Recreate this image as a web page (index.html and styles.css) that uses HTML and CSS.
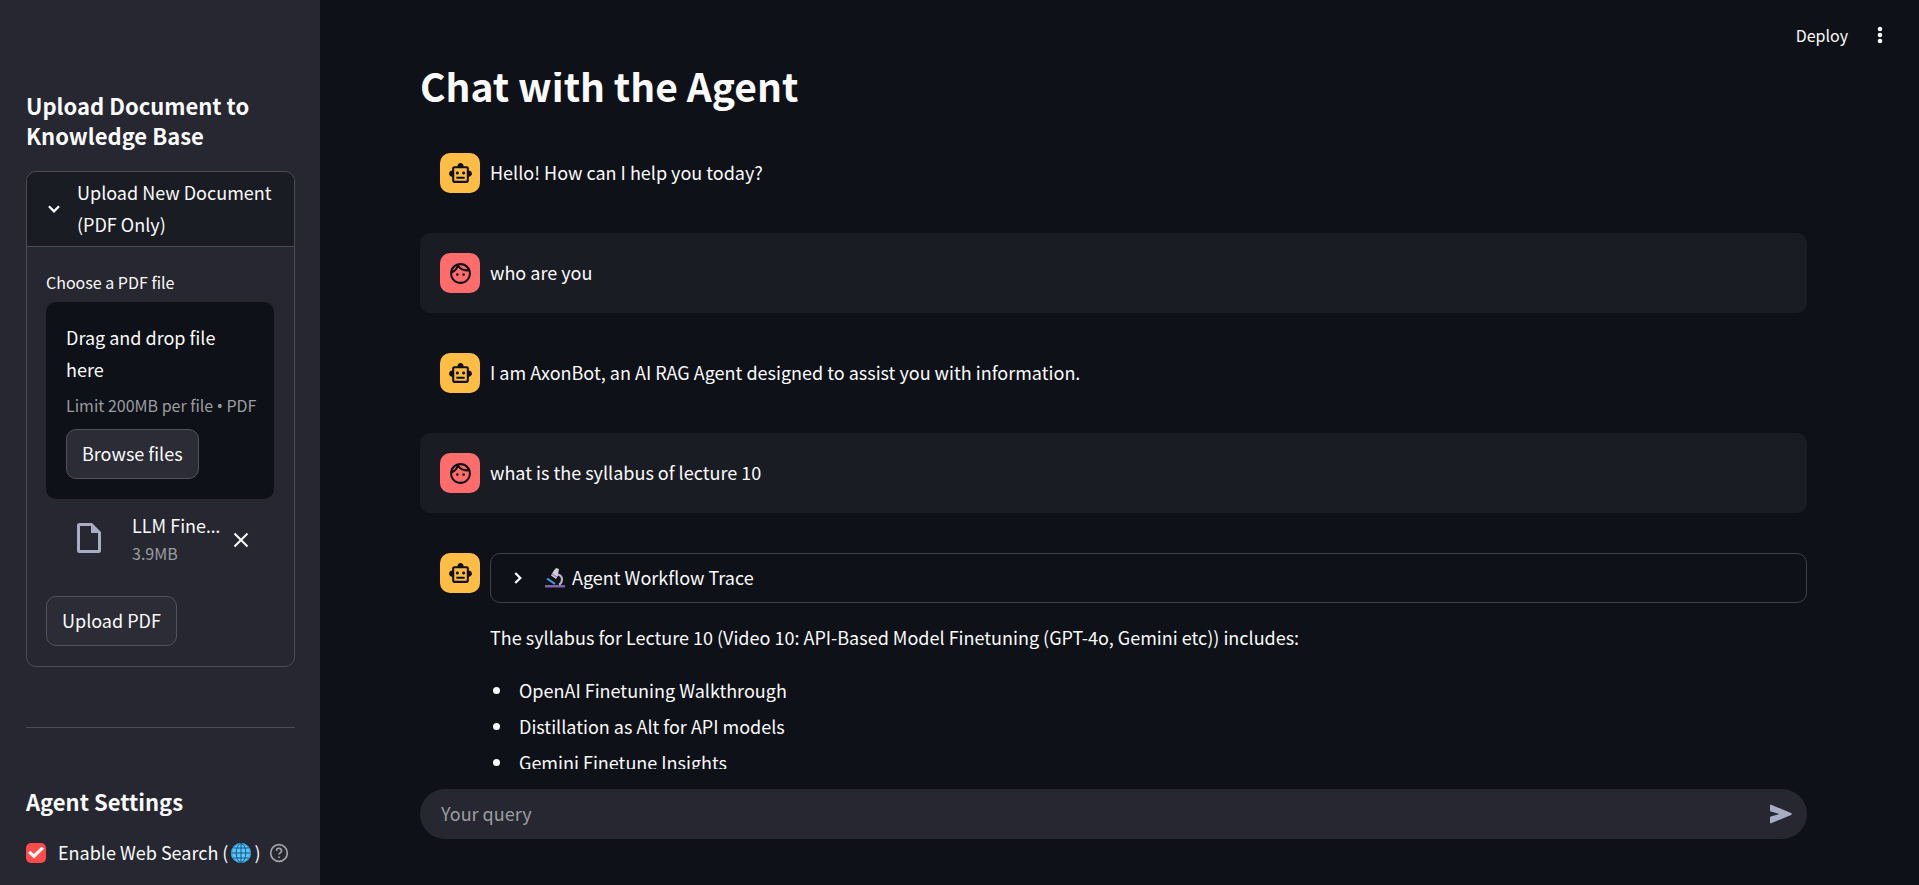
FILE: index.html
```html
<!DOCTYPE html>
<html lang="en">
<head>
<meta charset="utf-8">
<title>Chat with the Agent</title>
<link rel="stylesheet" href="styles.css">
</head>
<body>
<svg class="defs" aria-hidden="true">
  <symbol id="bot" viewBox="0 0 24 24"><path fill="currentColor" d="M20 9V7c0-1.100-.9-2-2-2h-3c0-1.660-1.340-3-3-3S9 3.340 9 5H6c-1.100 0-2 .9-2 2v2c-1.660 0-3 1.340-3 3s1.340 3 3 3v4c0 1.100.9 2 2 2h12c1.100 0 2-.9 2-2v-4c1.660 0 3-1.340 3-3s-1.340-3-3-3zm-2 10H6V7h12v12zm-9-6c-.83 0-1.500-.67-1.500-1.500S8.170 10 9 10s1.500.67 1.500 1.500S9.830 13 9 13zm7.500-1.500c0 .83-.67 1.500-1.500 1.500s-1.500-.67-1.500-1.500.67-1.500 1.500-1.500 1.500.67 1.500 1.500zM8 15h8v2H8v-2z"/></symbol>
  <symbol id="face" viewBox="0 0 24 24"><path fill="currentColor" d="M10.250 13c0 .69-.56 1.250-1.250 1.250S7.750 13.690 7.750 13s.56-1.250 1.250-1.250 1.250.56 1.250 1.250zM15 11.750c-.69 0-1.250.56-1.250 1.250s.56 1.250 1.250 1.250 1.250-.56 1.250-1.250-.56-1.250-1.250-1.250zm7 .25c0 5.520-4.480 10-10 10S2 17.520 2 12 6.480 2 12 2s10 4.480 10 10zM10.660 4.120C12.060 6.440 14.600 8 17.500 8c.46 0 .91-.05 1.340-.12C17.440 5.560 14.900 4 12 4c-.46 0-.91.05-1.340.12zM4.420 9.470c1.710-.97 3.030-2.550 3.660-4.440C6.370 6 5.050 7.580 4.420 9.470zM20 12c0-.78-.12-1.530-.33-2.240-.7.150-1.420.24-2.170.24-3.130 0-5.920-1.440-7.760-3.690C8.690 8.870 6.600 10.880 4 11.860c.01.04 0 .09 0 .14 0 4.410 3.590 8 8 8s8-3.590 8-8z"/></symbol>
</svg>
<div class="app">
  <aside class="sidebar">
    <h2 class="side-title">Upload Document to Knowledge Base</h2>
    <section class="expander">
      <button class="expander-head" type="button" aria-expanded="true">
        <svg class="chevron" viewBox="0 0 24 24" aria-hidden="true"><path d="M6.500 9l5.500 5.500L17.500 9"/></svg>
        <span>Upload New Document (PDF Only)</span>
      </button>
      <div class="expander-body">
        <p class="field-label">Choose a PDF file</p>
        <div class="dropzone">
          <p class="drop-text">Drag and drop file here</p>
          <p class="drop-limit">Limit 200MB per file <span class="punct">•</span> PDF</p>
          <button class="btn btn-dark" type="button">Browse files</button>
        </div>
        <div class="file">
          <svg class="file-icon" viewBox="0 0 24 30" aria-hidden="true"><path fill-rule="evenodd" d="M2.500 0H15l9 9v18.500a2.500 2.500 0 0 1-2.500 2.500h-19A2.500 2.500 0 0 1 0 27.500v-25A2.500 2.500 0 0 1 2.500 0zM3 3v24h18V10h-7V3z"/></svg>
          <div class="file-info">
            <p class="file-name">LLM Fine<span class="punct">…</span></p>
            <p class="file-size">3.9MB</p>
          </div>
          <button class="file-remove" type="button" aria-label="Remove file">
            <svg viewBox="0 0 16 16" aria-hidden="true"><path d="M1.500 1.500l13 13M14.500 1.500l-13 13"/></svg>
          </button>
        </div>
        <button class="btn" type="button">Upload PDF</button>
      </div>
    </section>
    <hr class="rule">
    <h2 class="side-title">Agent Settings</h2>
    <div class="option">
      <input class="check" type="checkbox" id="web-search" checked>
      <label class="option-label" for="web-search"><span>Enable Web Search (</span>
        <svg class="emoji" viewBox="0 0 20 20" role="img" aria-label="globe"><circle cx="10" cy="10" r="10" fill="#5cc4fb"/><g fill="none" stroke="#125a82"><circle cx="10" cy="10" r="9.400" stroke="#2f9bd6"/><ellipse cx="10" cy="10" rx="4.800" ry="9.400"/><path d="M10 .6v18.800M.6 10h18.800M2.400 5h15.200M2.400 15h15.200"/></g></svg>
        <span>)</span></label>
      <button class="help" type="button" aria-label="Help">
        <svg viewBox="0 0 24 24" aria-hidden="true"><circle cx="12" cy="12" r="10"/><path d="M9 9.200a3 3 0 0 1 6 .3c0 2-3 2.500-3 4.300M12 16.300v1.700"/></svg>
      </button>
    </div>
  </aside>
  <main class="main">
    <header class="topbar">
      <button class="deploy" type="button">Deploy</button>
      <button class="menu" type="button" aria-label="Menu">
        <svg viewBox="0 0 20 20" aria-hidden="true"><circle cx="10" cy="4" r="2.300"/><circle cx="10" cy="10" r="2.300"/><circle cx="10" cy="16" r="2.300"/></svg>
      </button>
    </header>
    <div class="scroll">
      <h1 class="title">Chat with the Agent</h1>
      <div class="messages">
        <article class="message"><span class="avatar bot"><svg><use href="#bot"/></svg></span><p class="text">Hello! How can I help you today?</p></article>
        <article class="message user"><span class="avatar person"><svg><use href="#face"/></svg></span><p class="text">who are you</p></article>
        <article class="message"><span class="avatar bot"><svg><use href="#bot"/></svg></span><p class="text">I am AxonBot, an AI RAG Agent designed to assist you with information.</p></article>
        <article class="message user"><span class="avatar person"><svg><use href="#face"/></svg></span><p class="text">what is the syllabus of lecture 10</p></article>
        <article class="message">
          <span class="avatar bot"><svg><use href="#bot"/></svg></span>
          <div class="answer">
            <button class="trace" type="button" aria-expanded="false">
              <svg class="chevron" viewBox="0 0 24 24" aria-hidden="true"><path d="M9 6.500l5.500 5.500L9 17.500"/></svg>
              <svg class="emoji" viewBox="0 0 20 20" aria-hidden="true"><path d="M12.500 6.500c3 .6 4.700 2.800 4.500 5.500-.2 2.300-1.300 3.900-2.800 5" fill="none" stroke="#b9b2c4" stroke-width="2.200"/><path d="M2 10.500l8 5.500" stroke="#3ea2ee" stroke-width="2"/><path d="M6 7.500l5 3.500 1.800-3L13.500 4 14 1 11 0 8.500 3z" fill="#d3ccdb"/><path d="M6.800 5.800l5 3.300" stroke="#9a7fb0" stroke-width="1.200"/><rect y="17" width="20" height="2.500" rx=".5" fill="#8264a5"/></svg>
              <span>Agent Workflow Trace</span>
            </button>
            <p class="text">The syllabus for Lecture 10 (Video 10: API-Based Model Finetuning (GPT-4o, Gemini etc)) includes:</p>
            <ul class="list">
              <li>OpenAI Finetuning Walkthrough</li>
              <li>Distillation as Alt for API models</li>
              <li>Gemini Finetune Insights</li>
            </ul>
          </div>
        </article>
      </div>
    </div>
    <form class="composer">
      <input class="query" type="text" placeholder="Your query" aria-label="Your query">
      <button class="send" type="submit" aria-label="Send">
        <svg viewBox="0 0 22 20" aria-hidden="true"><path d="M0 1.600v4.900q0 .8.800 1l8.700 2.500-8.700 2.500q-.8.200-.8 1v4.900q0 1.200 1.200.8L21 11q1.600-1 0-2L1.200.8Q0 .4 0 1.600z"/></svg>
      </button>
    </form>
  </main>
</div>
</body>
</html>
```
FILE: styles.css
```css
* { box-sizing: border-box; }

body {
  margin: 0;
  background: #0e1117;
  color: #fafafa;
  font: 18px/32px "Noto Sans CJK SC", "Noto Sans", sans-serif;
}

h1, h2, p, ul { margin: 0; }
button, input { font: inherit; color: inherit; }
button { border: 0; padding: 0; background: none; cursor: pointer; }
svg { display: block; flex: none; }
.defs { position: absolute; width: 0; height: 0; }
.punct { font-family: "Noto Sans", sans-serif; line-height: 1; }

.app { display: flex; height: 100vh; overflow: hidden; }

/* Sidebar */
.sidebar {
  flex: none;
  width: 320px;
  padding: 90px 25px 0 26px;
  background: #262730;
  overflow: hidden;
}
.side-title { font-size: 22px; line-height: 30px; font-weight: 700; }

.expander {
  margin-top: 21px;
  border: 1px solid #4b4c55;
  border-radius: 10px;
  overflow: hidden;
}
.expander-head {
  display: flex;
  align-items: center;
  gap: 12px;
  width: 100%;
  padding: 5px 16px;
  background: #1a1c24;
  border-bottom: 1px solid #4b4c55;
  text-align: left;
}
.expander-head span { padding-bottom: 2px; margin: -1px 0; }
.chevron {
  width: 22px;
  height: 22px;
  fill: none;
  stroke: #fafafa;
  stroke-width: 2.5;
}
.expander-body { padding: 20px; padding-left: 19px; }
.field-label { font-size: 16px; line-height: 30px; margin-bottom: 5px; }

.dropzone {
  padding: 19px 20px 20px;
  border-radius: 10px;
  background: #0e1117;
}
.drop-limit, .file-size { font-size: 16px; color: #9b9ca1; }
.drop-limit { line-height: 26px; margin: 7px 0 11px; white-space: nowrap; }

.btn {
  height: 50px;
  padding: 0 15px 2px;
  border: 1px solid #51525b;
  border-radius: 10px;
  background: #2b2c36;
}

.file {
  display: flex;
  align-items: center;
  padding: 12px 25px 28px 31px;
}
.file-icon { width: 24px; height: 30px; margin-bottom: 4px; fill: #a9adc3; }
.file-info { flex: 1; min-width: 0; margin: 0 7px 0 31px; }
.file-name { line-height: 28px; white-space: nowrap; }
.file-size { line-height: 29px; }
.file-remove svg { width: 16px; height: 16px; stroke: #fafafa; stroke-width: 2; }

.rule {
  height: 1px;
  margin: 60px 0 58px;
  border: 0;
  background: #4b4c55;
}

.option { display: flex; align-items: center; margin-top: 20px; }
.check {
  appearance: none;
  width: 20px;
  height: 20px;
  margin: 0 12px 0 0;
  border-radius: 5px;
  background: #ff4b4b;
  display: grid;
  place-items: center;
}
.check:checked::before {
  content: "";
  width: 16px;
  height: 12px;
  background: #fafafa;
  clip-path: polygon(0 55%, 14% 36%, 37% 62%, 86% 0, 100% 18%, 38% 100%);
}
.option-label { display: flex; align-items: center; gap: 3px; white-space: nowrap; }
.option-label span { padding-bottom: 1px; }
.emoji { width: 20px; height: 20px; }
.help { margin-left: 8px; }
.help svg {
  width: 20px;
  height: 20px;
  fill: none;
  stroke: #a3a4a9;
  stroke-width: 2;
}

/* Main column */
.main { flex: 1; min-width: 0; display: flex; flex-direction: column; }
.topbar {
  flex: none;
  display: flex;
  justify-content: flex-end;
  align-items: center;
  gap: 22px;
  height: 72px;
  padding: 0 29px 3px 0;
}
.deploy { font-size: 16px; }
.menu svg { width: 20px; height: 20px; fill: #fafafa; }

.scroll { flex: 1; min-height: 0; overflow: hidden; padding: 0 112px 0 100px; }
.title {
  margin-top: -20px;
  font-size: 39px;
  line-height: 66px;
  font-weight: 700;
}
.messages { display: flex; flex-direction: column; gap: 20px; margin-top: 15px; }
.message {
  display: flex;
  align-items: flex-start;
  gap: 10px;
  padding: 20px 0 20px 20px;
  border-radius: 10px;
}
.user { background: #1a1c24; }
.avatar {
  flex: none;
  display: grid;
  place-items: center;
  width: 40px;
  height: 40px;
  border-radius: 10px;
  color: #0e1117;
}
.avatar svg { width: 25px; height: 25px; }
.bot { background: #ffbd45; }
.person { background: #ff6c6c; }
.text { padding: 3px 0 5px; }

.answer { flex: 1; min-width: 0; display: flex; flex-direction: column; gap: 15px; }
.trace {
  display: flex;
  align-items: center;
  width: 100%;
  height: 50px;
  padding: 0 16px;
  border: 1px solid #3f4147;
  border-radius: 10px;
}
.trace span { padding-bottom: 2px; }
.trace .emoji { margin: 0 7px 0 16px; }
.list { padding: 0; list-style: none; }
.list li {
  display: flex;
  align-items: center;
  gap: 19px;
  padding: 1px 0 3px 3px;
}
.list li::before {
  content: "";
  width: 7px;
  height: 7px;
  border-radius: 50%;
  background: #fafafa;
}

.composer {
  flex: none;
  display: flex;
  align-items: center;
  height: 50px;
  margin: 20px 112px 46px 100px;
  padding: 0 15px 0 21px;
  border-radius: 25px;
  background: #262730;
}
.query { flex: 1; min-width: 0; padding: 0 0 3px; border: 0; outline: 0; background: none; }
.query::placeholder { color: #9b9ca1; opacity: 1; }
.send svg { width: 22px; height: 20px; fill: #a9adc3; }
```
